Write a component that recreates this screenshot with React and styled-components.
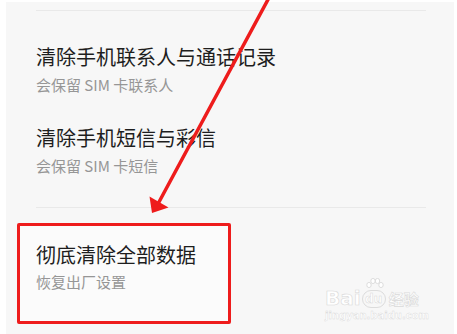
import React from "react";
import styled, { createGlobalStyle } from "styled-components";

const GlobalStyle = createGlobalStyle`
  html, body {
    margin: 0;
    padding: 0;
    background: #ffffff;
  }
  body {
    font-family: "Noto Sans CJK SC", "Noto Sans", sans-serif;
  }
`;

const Page = styled.div`
  position: relative;
  width: 457px;
  height: 334px;
  padding: 2px 3px 0 6px;
  box-sizing: border-box;
  background: #ffffff;
  overflow: hidden;
`;

const Screen = styled.div`
  height: 332px;
  padding-top: 8px;
  box-sizing: border-box;
  background: #f7f7f7;
`;

const Divider = styled.div`
  height: 1px;
  margin: ${(p) => p.$top || 0}px 28px 0 30px;
  background: #e9e9e9;
`;

const Item = styled.div`
  padding: ${(p) => p.$top}px 30px 0;
`;

const Title = styled.div`
  font-size: 20px;
  line-height: 28px;
  color: #1e1e1e;
  letter-spacing: 0;
`;

const Sub = styled.div`
  margin-top: ${(p) => p.$gap || 4}px;
  font-size: 15px;
  line-height: 20px;
  color: #969696;
`;

const Highlight = styled.div`
  width: 214px;
  height: 101px;
  margin: 15px 0 0 11px;
  padding: 15px 0 0 16px;
  box-sizing: border-box;
  border: 3px solid #ee1c1c;
  border-radius: 2px;
  background: #fbfbfb;
`;

const Overlay = styled.svg`
  position: absolute;
  left: 0;
  top: 0;
  pointer-events: none;
`;

const Watermark = styled.div`
  position: absolute;
  right: 28px;
  bottom: 13px;
  display: flex;
  flex-direction: column;
  align-items: flex-start;
  color: #ffffff;
  -webkit-text-stroke: 0.6px #d9d9d9;
  pointer-events: none;
`;

const LogoRow = styled.div`
  display: flex;
  align-items: flex-end;
  gap: 1px;
`;

const Bai = styled.span`
  font-family: "DejaVu Sans", sans-serif;
  font-weight: bold;
  font-size: 20px;
  line-height: 20px;
`;

const Du = styled.span`
  position: relative;
  display: inline-flex;
  align-items: center;
  justify-content: center;
  width: 24px;
  height: 18px;
  border: 1.5px solid #dcdcdc;
  border-radius: 9px;
  box-sizing: border-box;
  font-family: "DejaVu Sans", sans-serif;
  font-weight: bold;
  font-size: 12px;
  -webkit-text-stroke: 0.5px #d9d9d9;
`;

const Paw = styled.svg`
  position: absolute;
  left: 3px;
  top: -13px;
`;

const Jy = styled.span`
  margin-left: 2px;
  font-size: 15px;
  line-height: 18px;
  font-weight: bold;
`;

const Site = styled.span`
  margin-top: 2px;
  font-family: "DejaVu Sans", sans-serif;
  font-size: 10px;
  font-weight: bold;
  -webkit-text-stroke: 0.4px #d9d9d9;
`;

function App() {
  return (
    <>
      <GlobalStyle />
      <Page>
        <Screen>
          <Divider />
          <Item $top={32}>
            <Title>清除手机联系人与通话记录</Title>
            <Sub>会保留 SIM 卡联系人</Sub>
          </Item>
          <Item $top={29}>
            <Title>清除手机短信与彩信</Title>
            <Sub>会保留 SIM 卡短信</Sub>
          </Item>
          <Divider $top={31} />
          <Highlight>
            <Title>彻底清除全部数据</Title>
            <Sub $gap={3}>恢复出厂设置</Sub>
          </Highlight>
        </Screen>

        <Watermark>
          <LogoRow>
            <Bai>Bai</Bai>
            <Du>
              <Paw width="18" height="13" viewBox="0 0 18 13">
                <g fill="#fff" stroke="#d6d6d6" strokeWidth="0.8">
                  <ellipse cx="3" cy="7" rx="2.2" ry="2.6" />
                  <ellipse cx="7" cy="3" rx="2.2" ry="2.6" />
                  <ellipse cx="11.5" cy="3" rx="2.2" ry="2.6" />
                  <ellipse cx="15" cy="7" rx="2.2" ry="2.6" />
                </g>
              </Paw>
              du
            </Du>
            <Jy>经验</Jy>
          </LogoRow>
          <Site>jingyan.baidu.com</Site>
        </Watermark>

        <Overlay width="457" height="334" viewBox="0 0 457 334">
          <line
            x1="271"
            y1="-6"
            x2="159"
            y2="202"
            stroke="#ee1c1c"
            strokeWidth="3.5"
            strokeLinecap="round"
          />
          <polygon points="152,213 149.5,196.5 168.5,207.5" fill="#ee1c1c" />
        </Overlay>
      </Page>
    </>
  );
}

export default App;
